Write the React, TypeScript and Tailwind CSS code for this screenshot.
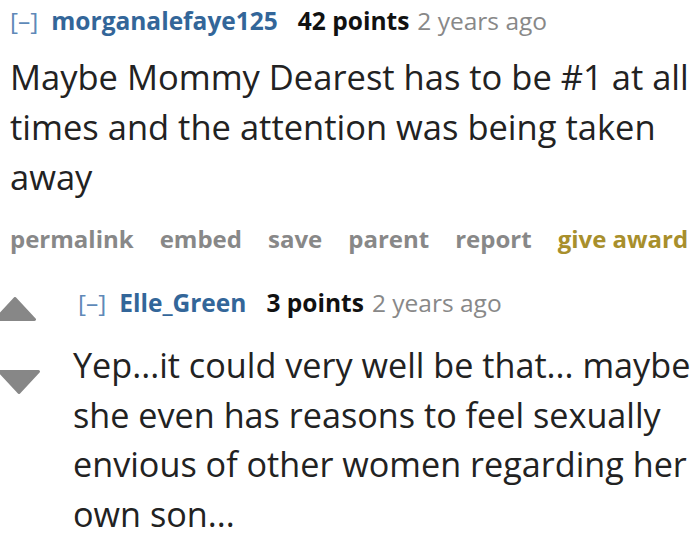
import React from "react";

const font = { fontFamily: '"Open Sans", "Noto Sans", sans-serif' };

function Header({ user, points }: { user: string; points: string }) {
  return (
    <div className="flex items-baseline h-[41px] leading-[41px] text-[24.5px] whitespace-nowrap">
      <span className="text-[#5f89b8] font-normal">[–]</span>
      <span className="ml-[13px] font-bold text-[#336699]">{user}</span>
      <span className="ml-[20px] font-bold text-[#111]">{points}</span>
      <span className="ml-[8px] text-[#888]">2 years ago</span>
    </div>
  );
}

function Arrow({ down }: { down?: boolean }) {
  return (
    <svg width="42" height="24" viewBox="0 0 42 24" className="block">
      <polygon
        points={down ? "1.5,1.5 40.5,1.5 21,22.5" : "21,1.5 40.5,22.5 1.5,22.5"}
        fill="#878787"
        stroke="#878787"
        strokeWidth="3"
        strokeLinejoin="round"
      />
    </svg>
  );
}

export default function App() {
  return (
    <div className="w-[700px] h-[545px] bg-white overflow-hidden" style={font}>
      <div className="pl-[10px]">
        <Header user="morganalefaye125" points="42 points" />
        <div className="mt-[11px] text-[34.5px] leading-[50px] text-[#222]">
          Maybe Mommy Dearest has to be #1 at all times and the attention was being taken away
        </div>
        <div className="mt-[22px] flex gap-[26px] text-[24px] leading-[30px] font-bold text-[#888] whitespace-nowrap">
          <span>permalink</span>
          <span>embed</span>
          <span>save</span>
          <span>parent</span>
          <span>report</span>
          <span className="text-[#a88f2c]">give award</span>
        </div>
      </div>
      <div className="flex mt-[28px]">
        <div className="w-[73px] shrink-0 flex flex-col">
          <div className="-ml-[6px] mt-[15px]">
            <Arrow />
          </div>
          <div className="-ml-[2px] mt-[49px]">
            <Arrow down />
          </div>
        </div>
        <div className="flex-1 min-w-0">
          <div className="pl-[5px]">
            <Header user="Elle_Green" points="3 points" />
          </div>
          <div className="mt-[17px] text-[34.2px] leading-[49.7px] text-[#222]">
            Yep...it could very well be that... maybe she even has reasons to feel sexually envious of other women regarding her own son...
          </div>
        </div>
      </div>
    </div>
  );
}
